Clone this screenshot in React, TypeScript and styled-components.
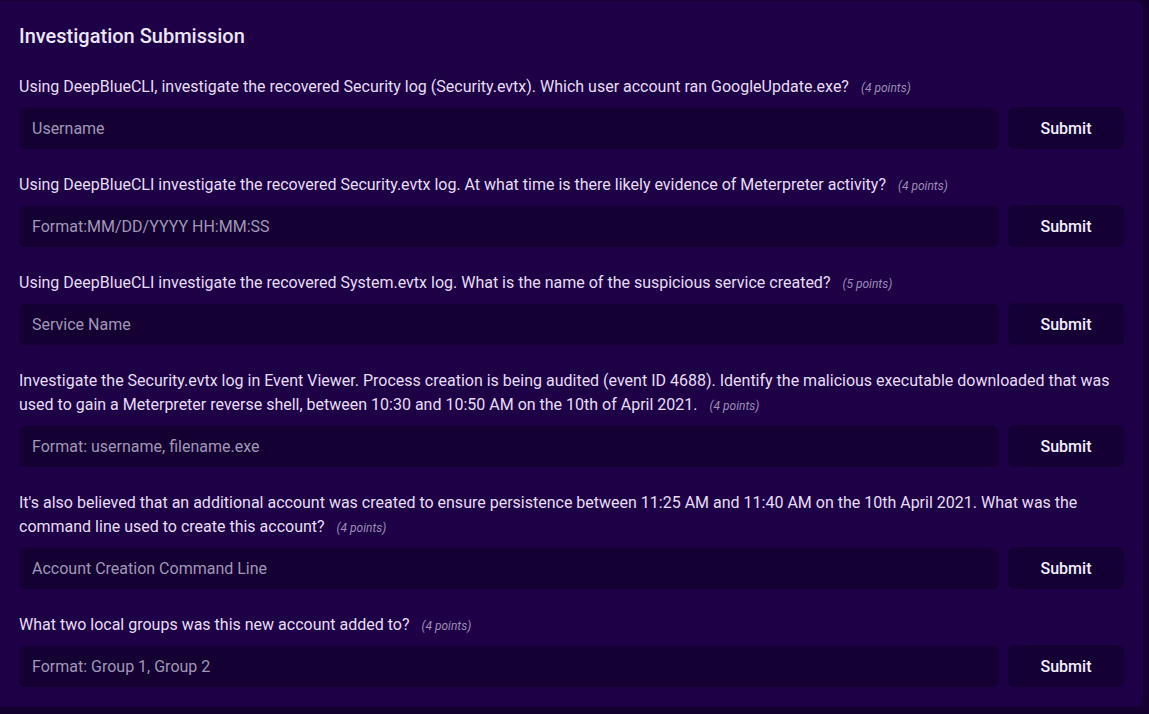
import React from "react";
import styled, { createGlobalStyle } from "styled-components";

const Global = createGlobalStyle`
  html, body { margin: 0; padding: 0; background: #14002e; }
  body { font-family: Roboto, "Noto Sans", Arial, sans-serif; }
  * { box-sizing: border-box; }
`;

const Panel = styled.section`
  margin: 1px 6px 0 0;
  height: 706px;
  background: #1e0046;
  border-radius: 0 6px 6px 0;
  padding: 21px 19px 21px 19px;
  display: flex;
  flex-direction: column;
`;

const Title = styled.h2`
  margin: 0 0 25px 0;
  font-size: 20px;
  line-height: 28px;
  font-weight: 500;
  color: #ece6f7;
`;

const List = styled.div`
  display: flex;
  flex-direction: column;
  gap: 24px;
`;

const Block = styled.div`
  display: flex;
  flex-direction: column;
  gap: 8px;
`;

const Question = styled.p`
  margin: 0;
  font-size: 16px;
  line-height: 24px;
  color: #e6def4;
`;

const Points = styled.span`
  margin-left: 8px;
  font-size: 12px;
  line-height: 1;
  font-style: italic;
  color: #9b8fb6;
  white-space: nowrap;
`;

const Row = styled.div`
  display: flex;
  gap: 9px;
  align-items: center;
`;

const Input = styled.input`
  flex: 1;
  height: 41px;
  border: none;
  outline: none;
  border-radius: 6px;
  background: #140032;
  padding: 0 13px;
  font-family: Roboto, "Noto Sans", Arial, sans-serif;
  font-size: 16px;
  color: #e4dcf2;
  &::placeholder { color: #a097b6; }
`;

const Button = styled.button`
  width: 116px;
  height: 42px;
  border: none;
  border-radius: 6px;
  background: #150036;
  color: #f4f0fb;
  font-family: Roboto, "Noto Sans", Arial, sans-serif;
  font-size: 16px;
  font-weight: 500;
  cursor: pointer;
`;

const questions = [
  {
    q: "Using DeepBlueCLI, investigate the recovered Security log (Security.evtx). Which user account ran GoogleUpdate.exe?",
    p: 4,
    ph: "Username",
  },
  {
    q: "Using DeepBlueCLI investigate the recovered Security.evtx log. At what time is there likely evidence of Meterpreter activity?",
    p: 4,
    ph: "Format:MM/DD/YYYY HH:MM:SS",
  },
  {
    q: "Using DeepBlueCLI investigate the recovered System.evtx log. What is the name of the suspicious service created?",
    p: 5,
    ph: "Service Name",
  },
  {
    q: "Investigate the Security.evtx log in Event Viewer. Process creation is being audited (event ID 4688). Identify the malicious executable downloaded that was used to gain a Meterpreter reverse shell, between 10:30 and 10:50 AM on the 10th of April 2021.",
    p: 4,
    ph: "Format: username, filename.exe",
  },
  {
    q: "It's also believed that an additional account was created to ensure persistence between 11:25 AM and 11:40 AM on the 10th April 2021. What was the command line used to create this account?",
    p: 4,
    ph: "Account Creation Command Line",
  },
  {
    q: "What two local groups was this new account added to?",
    p: 4,
    ph: "Format: Group 1, Group 2",
  },
];

export default function App() {
  return (
    <>
      <Global />
      <Panel>
        <Title>Investigation Submission</Title>
        <List>
          {questions.map((item, i) => (
            <Block key={i}>
              <Question>
                {item.q} <Points>({item.p} points)</Points>
              </Question>
              <Row>
                <Input placeholder={item.ph} />
                <Button>Submit</Button>
              </Row>
            </Block>
          ))}
        </List>
      </Panel>
    </>
  );
}
